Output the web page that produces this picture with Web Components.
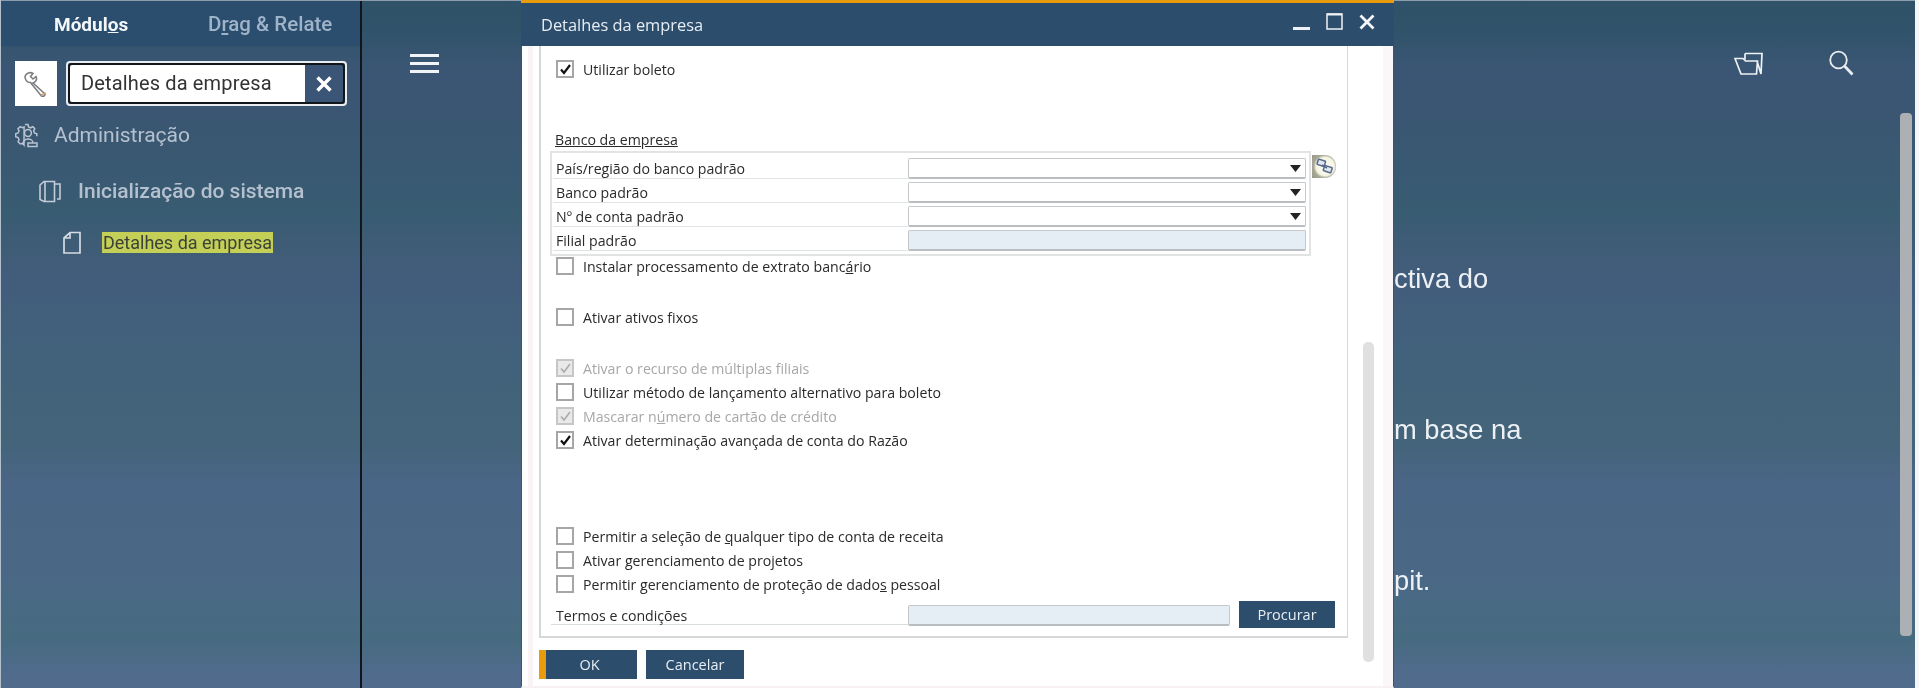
<!DOCTYPE html>
<html>
<head>
<meta charset="utf-8">
<style>
  html, body { margin: 0; height: 100%; overflow: hidden; background: #f4f6f8; }
</style>
</head>
<body>
<b1-shell>
  <b1-sidebar slot="side">
    <b1-tree-item level="0" icon="gear">Administração</b1-tree-item>
    <b1-tree-item level="1" icon="pages">Inicialização do sistema</b1-tree-item>
    <b1-tree-item level="2" icon="page" hit>Detalhes da empresa</b1-tree-item>
  </b1-sidebar>
  <b1-main slot="main">
    <p>ctiva do</p>
    <p>m base na</p>
    <p>pit.</p>
  </b1-main>
  <b1-dialog slot="window" heading="Detalhes da empresa">
    <b1-check checked style="margin-top:11px">Utilizar boleto</b1-check>
    <b1-section style="margin-top:47px;margin-bottom:-2px" heading="Banco da empresa">
      <b1-field select>País/região do banco padrão</b1-field>
      <b1-field select>Banco padrão</b1-field>
      <b1-field select>Nº de conta padrão</b1-field>
      <b1-field disabled>Filial padrão</b1-field>
    </b1-section>
    <b1-check>Instalar processamento de extrato banc<u>á</u>rio</b1-check>
    <b1-check style="margin-top:27px">Ativar ativos fixos</b1-check>
    <b1-check style="margin-top:27px" checked disabled>Ativar o recurso de múltiplas filiais</b1-check>
    <b1-check>Utilizar método de lançamento alternativo para boleto</b1-check>
    <b1-check checked disabled>Mascarar n<u>ú</u>mero de cartão de crédito</b1-check>
    <b1-check checked>Ativar determinação avançada de conta do Razão</b1-check>
    <b1-check style="margin-top:72px"><span>Permitir a seleção de <u>q</u>ualquer tipo de conta de receita</span></b1-check>
    <b1-check>Ativar gerenciamento de projetos</b1-check>
    <b1-check>Permitir gerenciamento de proteção de dado<u>s</u> pessoal</b1-check>
    <b1-terms>Termos e condições</b1-terms>
  </b1-dialog>
</b1-shell>

<script>
const UI_FONT = '"Open Sans", "Noto Sans", sans-serif';
const ICONS = {
  gear: `<svg width="24" height="25" viewBox="0 0 24 25" fill="none" stroke="#b9c4d1" stroke-width="1.5"><path d="M10 1.5h3l.6 2.4 2 .9 2.3-1.1 1.9 2-1.1 2.2.7 2 2.4.8v2.6M9 22l-1.4-1.7-2.3.7-2.2-2.2.9-2.2-.9-2-2.4-.8v-3l2.4-.8.9-2-1-2.3 2.2-2 2.2 1 1.7-.8z"/><circle cx="13" cy="10" r="3.4"/><path d="M8 22c0-4 2-6 5-6s5 2 5 4M13 20h9v3.500h-9z"/></svg>`,
  pages: `<svg width="22" height="23" viewBox="0 0 22 23" fill="none" stroke="#c3ccd7" stroke-width="1.6"><path d="M1 5l4-3.500h10.500V21.500H5L1 19.500zM6 2v19M16 4h5v15h-3"/></svg>`,
  page: `<svg width="18" height="23" viewBox="0 0 18 23" fill="none" stroke="#d5dbe3" stroke-width="1.7"><path d="M1 7l6-5.500h10v20.500H1zM7 1.500V7H1" /></svg>`
};

function define(name, markup) {
  customElements.define(name, class extends HTMLElement {
    constructor() {
      super();
      const root = this.attachShadow({ mode: 'open' });
      root.innerHTML = typeof markup === 'function' ? markup(this) : markup;
    }
  });
}

define('b1-shell', `
  <style>
    :host { display: flex; position: relative; width: 1915px; height: 688px; box-sizing: border-box; overflow: hidden; filter: blur(.35px);
      padding-top: 1px; border-left: 1px solid #b4c0cc;
      background: linear-gradient(#8d9dac, #8d9dac) top / 100% 1px no-repeat, linear-gradient(180deg, #2f5268 0, #30536a 30px, #3b5674 70px, #3a5672 120px, #385c72 215px, #3f5c76 245px, #425d7c 280px, #42627b 370px, #436479 440px, #4a6585 480px, #4a6886 570px, #466b80 640px, #506b8c 672px); }
    .window { position: absolute; left: 520px; top: 0; }
  </style>
  <slot name="side"></slot>
  <slot name="main"></slot>
  <div class="window"><slot name="window"></slot></div>`);

define('b1-sidebar', `
  <style>
    :host { display: flex; flex-direction: column; flex: none; width: 359px; height: 687px; border-right: 2px solid #10161c; font-family: Roboto, sans-serif; }
    .tabs { display: flex; height: 45px; background: #2b4d6e; font-size: 20.500px; line-height: 47px; }
    .tabs span { color: #9fb3c9; font-weight: 500; }
    .tabs .on { margin-left: 53px; color: #f4f7fa; width: 154px; font-weight: 700; font-size: 19px; }
    .search { display: flex; gap: 9px; margin: 15px 0 0 14px; }
    .tool { display: flex; width: 42px; height: 45px; align-items: center; justify-content: center; background: #fff; }
    .box { display: flex; box-sizing: border-box; width: 281px; height: 45px; border: 2px solid #e8ecf0; border-radius: 4px; }
    .inner { display: flex; flex: 1; box-sizing: border-box; border: 2px solid #11161b; border-radius: 4px; overflow: hidden; background: #3a5576; }
    .text { flex: none; box-sizing: border-box; width: 235px; padding-left: 11px; background: #fff; color: #333; font-size: 20px; letter-spacing: .15px; line-height: 36px; }
    .x { display: flex; flex: 1; align-items: center; justify-content: center; }
    .tree { display: flex; flex-direction: column; }
  </style>
  <div class="tabs"><span class="on">Módul<u>o</u>s</span><span>D<u>r</u>ag &amp; Relate</span></div>
  <div class="search">
    <div class="tool">
      <svg width="26" height="26" viewBox="0 0 26 26" fill="none" stroke="#7c7f82" stroke-width="1.600"><path d="M2 5.500C3 2 7 .500 10 2.500L7.500 5.500l2.500 2.500 3-2.500c1.500 3-.500 6-3 6.500l11.500 10.500c.800 1 .500 2-.500 2.500s-2 .500-2.800-.300L7.500 11.500C4.500 12 2 9 2 5.500z"/><path d="M18 24l5-2" stroke="#dca06c"/></svg>
    </div>
    <div class="box"><div class="inner">
      <div class="text">Detalhes da empresa</div>
      <div class="x"><svg width="18" height="18" viewBox="0 0 18 18" stroke="#fff" stroke-width="3.400"><path d="M2.500 2.500l13 13M15.500 2.500l-13 13"/></svg></div>
    </div></div>
  </div>
  <div class="tree"><slot></slot></div>`);

define('b1-tree-item', el => {
  const level = +el.getAttribute('level');
  const pad = [14, 38, 62][level];
  const gap = [15, 17, 21][level];
  const top = [16, 30, 25][level];
  return `
  <style>
    :host { display: flex; align-items: center; height: 26px; margin-top: ${top}px; padding-left: ${pad}px; gap: ${gap}px; color: #b6c1cf; font-size: ${level === 2 ? 18 : 21}px; font-weight: ${level === 1 ? 500 : 400}; white-space: nowrap; }
    svg { display: block; flex: none; }
    .hit { background: #c4cf58; color: #3a4238; padding: 0 1px; line-height: 21px; }
  </style>
  ${ICONS[el.getAttribute('icon')]}
  <span class="${el.hasAttribute('hit') ? 'hit' : ''}"><slot></slot></span>`;
});

define('b1-main', `
  <style>
    :host { display: flex; flex-direction: column; position: relative; flex: 1; min-width: 0; height: 687px; color: #edf1f5; font-family: "Liberation Sans", Arial, sans-serif; font-size: 27.300px; }
    .top { display: flex; align-items: center; height: 62px; margin-top: 31px; padding: 0 61px 0 48px; }
    .burger { display: flex; flex-direction: column; gap: 5px; width: 29px; margin-right: auto; }
    .burger i { display: block; height: 3px; background: #f2f5f7; }
    .icons { display: flex; gap: 65px; align-items: center; }
    .copy { display: flex; flex-direction: column; gap: 121px; margin-top: 170px; padding-left: 1032px; }
    ::slotted(p) { margin: 0; height: 30px; line-height: 30px; }
    .thumb { position: absolute; right: 3px; top: 112px; width: 12px; height: 523px; border-radius: 4px; background: #acafb4; }
  </style>
  <div class="top">
    <div class="burger"><i></i><i></i><i></i></div>
    <div class="icons">
      <svg width="29" height="23" viewBox="0 0 29 23" fill="none" stroke="#eef2f5" stroke-width="1.700"><path d="M1 6.500h8l2.500 2.500h12l-1 13H7zM11 1.500h17l-1 20.500-4-13M11 1.500v6"/></svg>
      <svg width="26" height="26" viewBox="0 0 26 26" fill="none" stroke="#e8edf2" stroke-width="1.800"><circle cx="10.500" cy="10" r="8.300"/><path d="M16.500 16l8 8.500" stroke-width="2.800"/></svg>
    </div>
  </div>
  <div class="copy"><slot></slot></div>
  <div class="thumb"></div>`);

define('b1-dialog', el => `
  <style>
    :host { display: flex; flex-direction: column; box-sizing: border-box; width: 873px; height: 688px; background: #fff; border-top: 3px solid #e89b0c; font-family: ${UI_FONT}; font-size: 14.150px; color: #2a2a2a; }
    .head { display: flex; flex: none; align-items: center; height: 43px; padding-left: 20px; background: #2c4d6c; color: #e7edf3; font-size: 16.400px; }
    .head span { margin-right: auto; }
    .ctl { display: flex; align-items: center; gap: 16px; padding: 0 19px 6px 0; }
    .body { display: flex; position: relative; flex: 1; min-height: 0; border-left: 1px solid #33597a; border-right: 1px solid #33597a; border-bottom: 2px solid #f7f1f3; }
    .gutter { flex: none; width: 17px; background: linear-gradient(90deg, #fff 6px, #f9f3f5 6px, #f9f3f5 11px, #fff 11px); }
    .col { display: flex; flex-direction: column; width: 809px; }
    .panel { display: flex; flex-direction: column; box-sizing: border-box; height: 592px; border: 1px solid #d6d8d8; border-width: 0 1px 2px 2px; }
    .btns { display: flex; gap: 9px; margin-top: 12px; }
    .track { position: absolute; left: 841px; top: 296px; width: 11px; height: 320px; border-radius: 5px; background: #e0e0e0; }
    .edge { position: absolute; right: 0; top: 0; bottom: 0; width: 10px; background: #fbf6f7; }
  </style>
  <div class="head"><span>${el.getAttribute('heading')}</span>
    <div class="ctl">
      <svg width="17" height="17" viewBox="0 0 17 17"><path d="M0 16h17v3H0z" fill="#eef2f6" transform="translate(0 -2)"/></svg>
      <svg width="17" height="17" viewBox="0 0 17 17" fill="none" stroke="#eef2f6" stroke-width="1.500"><path d="M1 1h15v15H1z"/><path d="M1 1.500h15" stroke-width="2"/></svg>
      <svg width="16" height="16" viewBox="0 0 16 16" stroke="#f4f7fa" stroke-width="2.800"><path d="M1.500 1.500l13 13M14.500 1.500l-13 13"/></svg>
    </div>
  </div>
  <div class="body">
    <div class="gutter"></div>
    <div class="col">
      <div class="panel"><slot></slot></div>
      <div class="btns"><b1-button primary>OK</b1-button><b1-button>Cancelar</b1-button></div>
    </div>
    <div class="track"></div>
    <div class="edge"></div>
  </div>`);

define('b1-check', el => {
  const disabled = el.hasAttribute('disabled');
  const mark = el.hasAttribute('checked')
    ? `<svg width="13" height="13" viewBox="0 0 13 13" fill="none" stroke="${disabled ? '#a9a9a9' : '#111'}" stroke-width="${disabled ? 1.500 : 2.200}"><path d="M2 6.500l3 3.500 6-8"/></svg>` : '';
  return `
  <style>
    :host { display: flex; align-items: center; gap: 9px; height: 24px; margin-left: 15px; white-space: nowrap; color: ${disabled ? '#a7a7a7' : '#2a2a2a'}; }
    .box { display: flex; flex: none; align-items: center; justify-content: center; box-sizing: border-box; width: 18px; height: 18px; border: 2px solid ${disabled ? '#c6c6c6' : '#a4a7a6'}; background: ${disabled ? '#e9e9e9' : '#fff'}; }
  </style>
  <div class="box">${mark}</div><span><slot></slot></span>`;
});

define('b1-section', el => `
  <style>
    :host { display: block; }
    .title { margin-left: 14px; height: 23px; line-height: 24px; text-decoration: underline; color: #2a2a2a; }
    .wrap { display: flex; }
    .group { display: flex; flex-direction: column; box-sizing: border-box; width: 761px; height: 105px; margin-left: 9px; padding: 4px 1px 0 1px; border: 2px solid #e2e3e3; }
    .link { display: flex; box-sizing: border-box; margin: 4px 0 0 1px; width: 24px; height: 23px; align-items: center; justify-content: center; border-radius: 0 11px 11px 0; background: radial-gradient(circle at 55% 50%, #fdfcf2 0, #f6f4e4 52%, #a8a896 66%, #97978a 100%); }
  </style>
  <div class="title">${el.getAttribute('heading')}</div>
  <div class="wrap">
    <div class="group"><slot></slot></div>
    <div class="link"><svg width="17" height="17" viewBox="0 0 17 17" fill="#dfe6ef" stroke="#566a8c" stroke-width="1.500"><rect x="1.500" y="2" width="7.500" height="5.500" rx="1" transform="rotate(18 5 5)"/><rect x="7.500" y="8.500" width="8" height="5.500" rx="1" transform="rotate(18 12 12)"/><path d="M6 7l5 3" fill="none"/></svg></div>
  </div>`);

define('b1-field', el => {
  const disabled = el.hasAttribute('disabled');
  const arrow = el.hasAttribute('select')
    ? `<svg class="arrow" width="11" height="7" viewBox="0 0 11 7"><path d="M0 0h11L5.500 7z" fill="#1f2428"/></svg>` : '';
  return `
  <style>
    :host { display: flex; align-items: flex-start; height: 24px; }
    .label { box-sizing: border-box; width: 355px; height: 22px; padding-left: 3px; line-height: 24px; border-bottom: 1px solid #dfe4e6; white-space: nowrap; }
    .input { display: flex; align-items: center; justify-content: flex-end; box-sizing: border-box; width: 398px; height: 21px; margin-top: 1px; padding-right: 4px; border: 1px solid #c4c8cb; border-bottom: 2px solid #b9bdc0; border-radius: 2px; background: ${disabled ? '#e5edf5' : '#fff'}; }
    .arrow { display: block; }
  </style>
  <div class="label"><slot></slot></div><div class="input">${arrow}</div>`;
});

define('b1-terms', `
  <style>
    :host { display: flex; align-items: flex-start; height: 27px; margin: 5px 0 0 10px; }
    .label { box-sizing: border-box; width: 357px; height: 24px; padding: 5px 0 0 5px; line-height: 20px; border-bottom: 1px solid #d8dde0; white-space: nowrap; }
    .input { box-sizing: border-box; width: 322px; height: 21px; margin-top: 4px; border: 1px solid #c4c8cb; border-bottom: 2px solid #b9bdc0; border-radius: 2px; background: #e5edf5; }
    b1-button { margin-left: 9px; --w: 96px; --h: 27px; }
  </style>
  <div class="label"><slot></slot></div><div class="input"></div><b1-button>Procurar</b1-button>`);

define('b1-button', el => `
  <style>
    :host { display: block; }
    .b { box-sizing: border-box; width: var(--w, 98px); height: var(--h, 29px); line-height: var(--h, 29px); text-align: center; background: #2c4d6c; color: #e8eef4; font-size: 14.500px; ${el.hasAttribute('primary') ? 'border-left: 7px solid #e89b0c; padding-right: 4px;' : ''} }
  </style>
  <div class="b"><slot></slot></div>`);
</script>
</body>
</html>
